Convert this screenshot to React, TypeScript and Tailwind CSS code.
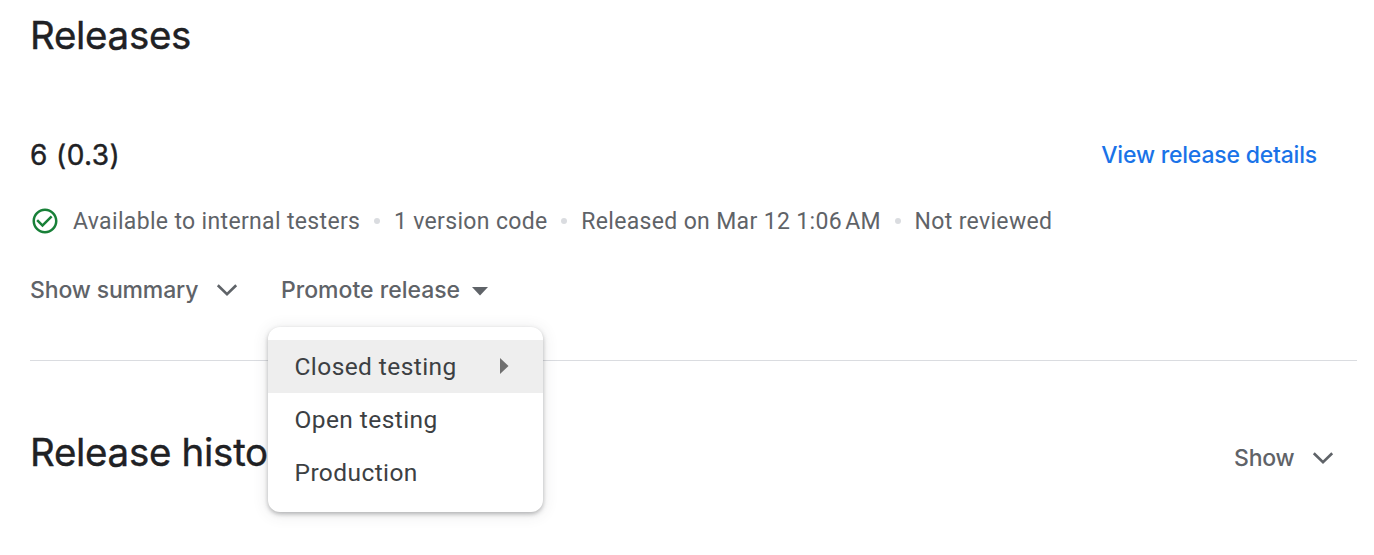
import React from "react";

const Dot = () => <span className="mx-[13.8px] h-[6px] w-[6px] shrink-0 rounded-full bg-[#dadce0]" />;

const Chevron = () => (
  <svg className="shrink-0" width="22" height="14" viewBox="0 0 22 14" fill="none" stroke="#5f6368" strokeWidth="2.6">
    <path d="M1.8 2.2 L11 11.2 L20.2 2.2" />
  </svg>
);

function PromoteMenu() {
  return (
    <div className="absolute -left-[13px] top-[54px] h-[185px] w-[275px] rounded-[12px] bg-white pt-[13px] text-[24.5px] tracking-[0.42px] whitespace-nowrap text-[#3c4043] shadow-[0_2px_4px_rgba(60,64,67,0.35),0_2px_16px_rgba(60,64,67,0.13)] font-['Roboto',sans-serif] font-normal">
      <div className="flex h-[53px] items-center justify-between bg-[#eeeeee] pl-[26.5px] pr-[34px]">
        <span className="pt-[3px]">Closed testing</span>
        <svg width="9" height="16" viewBox="0 0 9 16" fill="#6f6f6f"><path d="M0 0 L8.5 8 L0 16Z" /></svg>
      </div>
      <div className="flex h-[53px] items-center pl-[26.5px] pt-[2px]">Open testing</div>
      <div className="flex h-[53px] items-center pl-[26.5px] pt-[2px]">Production</div>
    </div>
  );
}

export default function App() {
  return (
    <main className="flex h-[555px] w-[1374px] flex-col overflow-hidden bg-white pl-[30px] pr-[17px] font-['Roboto',sans-serif] text-[#5f6368]">
      <h1 className="mt-[11px] h-[48px] text-[38.5px] leading-[48px] font-normal tracking-[-0.3px] text-[#202124] [-webkit-text-stroke:0.4px_#202124] font-['Inter',sans-serif]">Releases</h1>
      <div className="mt-[80px] flex h-[32px] items-center justify-between pr-[40px] font-['Inter',sans-serif]">
        <h2 className="text-[28px] font-normal tracking-[0.4px] text-[#202124] [-webkit-text-stroke:0.4px_#202124]">6 (0.3)</h2>
        <a className="text-[23px] font-medium tracking-[-0.2px] text-[#1a73e8]">View release details</a>
      </div>
      <div className="mt-[34px] flex h-[32px] items-center whitespace-nowrap text-[23px] tracking-[0.34px]">
        <svg className="mr-[13px] shrink-0" width="30" height="30" viewBox="0 0 24 24" fill="#188038">
          <path d="M16.59 7.58 10 14.17l-3.59-3.58L5 12l5 5 8-8zM12 2C6.48 2 2 6.48 2 12s4.48 10 10 10 10-4.48 10-10S17.52 2 12 2m0 18c-4.42 0-8-3.58-8-8s3.58-8 8-8 8 3.58 8 8-3.58 8-8 8" />
        </svg>
        <span className="pt-[2px]">Available to internal testers</span><Dot />
        <span className="pt-[2px]">1 version code</span><Dot />
        <span className="pt-[2px]">Released on Mar 12 1:06{"\u202f"}AM</span><Dot />
        <span className="pt-[2px]">Not reviewed</span>
      </div>
      <div className="mt-[37px] flex h-[32px] items-center whitespace-nowrap text-[23px] font-medium font-['Inter',sans-serif]">
        <button className="flex w-[208px] items-center justify-between tracking-[-0.15px]">Show summary<Chevron /></button>
        <div className="relative z-10 ml-[43px]">
          <button className="flex w-[207px] items-center justify-between">
            Promote release
            <svg className="mt-[2px]" width="16" height="9" viewBox="0 0 16 9" fill="#5f6368"><path d="M0 0 H16 L8 8.5Z" /></svg>
          </button>
          <PromoteMenu />
        </div>
      </div>
      <hr className="mt-[54px] border-0 border-t border-[#dadce0]" />
      <div className="mt-[66px] flex h-[50px] items-center justify-between pr-[23.5px] font-['Inter',sans-serif]">
        <h1 className="text-[38.5px] leading-[48px] font-normal tracking-[-0.3px] text-[#202124] [-webkit-text-stroke:0.4px_#202124]">Release history</h1>
        <button className="mt-[12px] flex w-[99.5px] items-center justify-between text-[23px] font-medium tracking-[-0.2px]">Show<Chevron /></button>
      </div>
    </main>
  );
}
